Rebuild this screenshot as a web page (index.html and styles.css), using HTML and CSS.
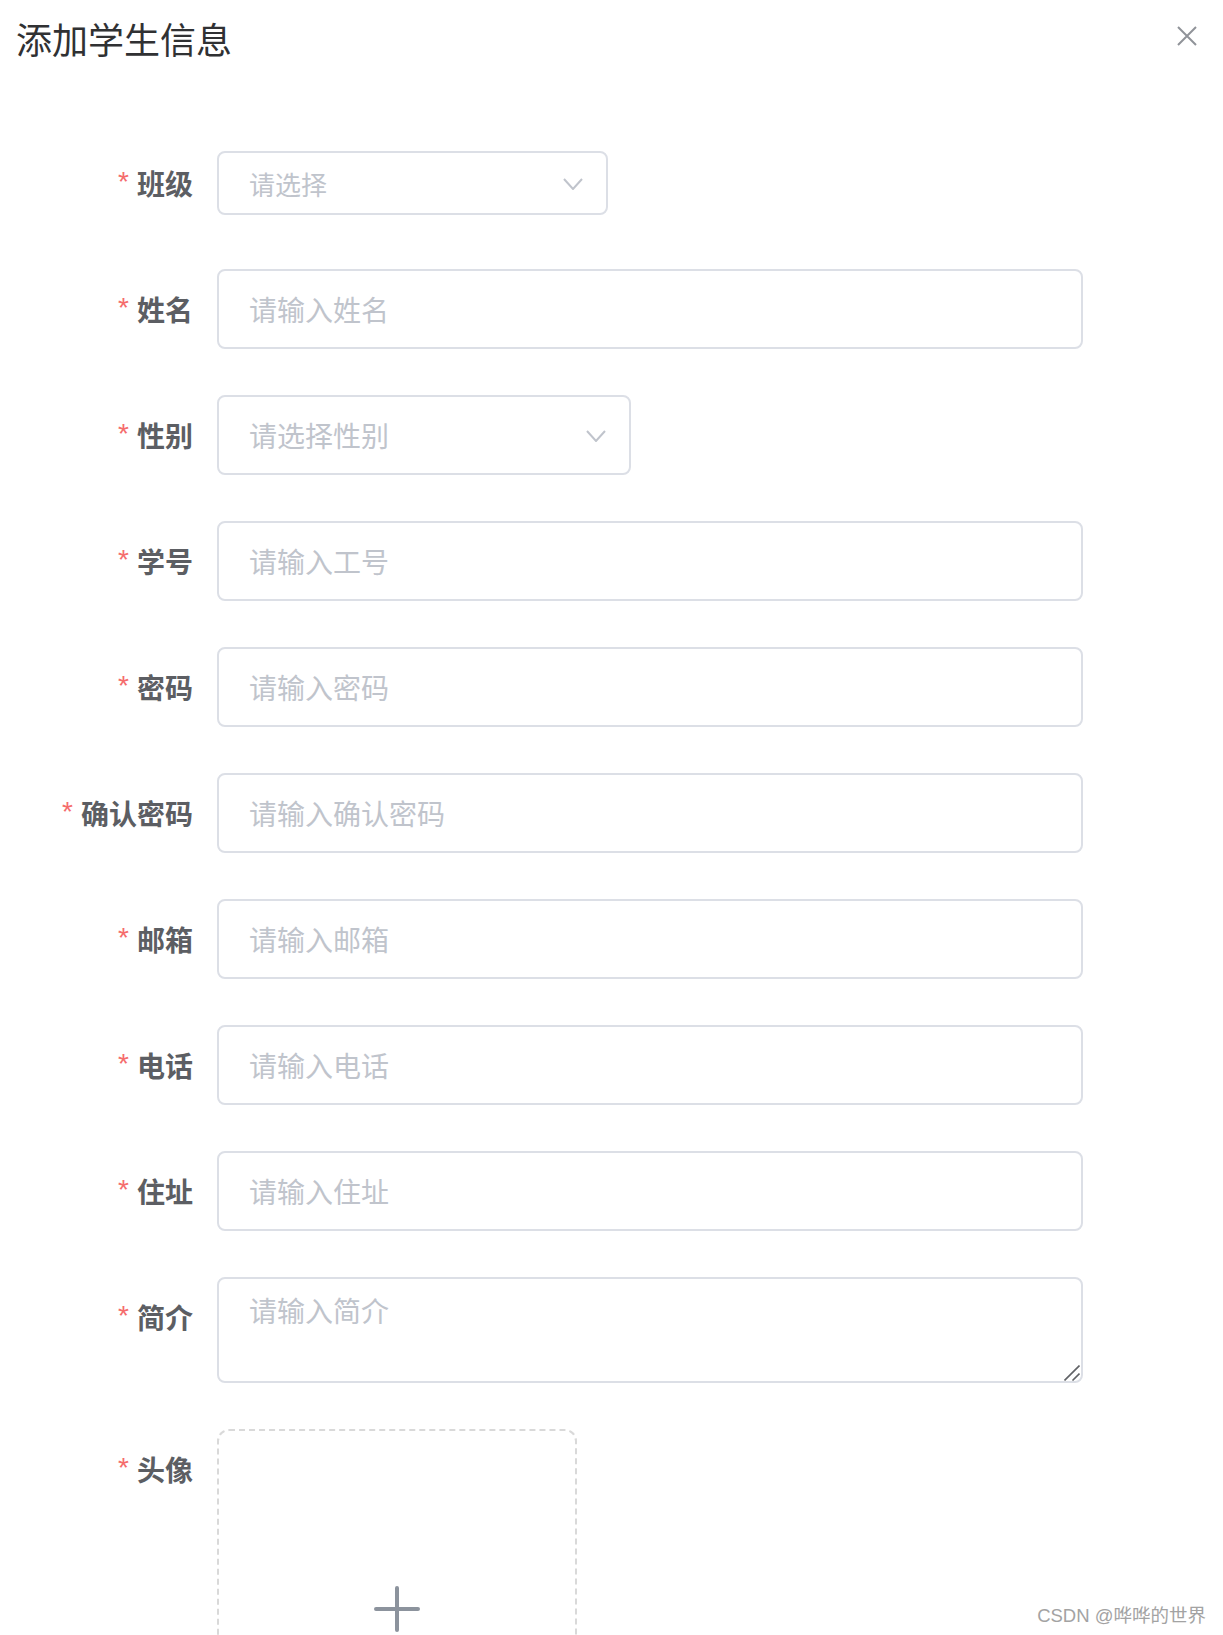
FILE: index.html
```
<!DOCTYPE html>
<html lang="zh-CN">
<head>
<meta charset="utf-8">
<title>添加学生信息</title>
<link rel="stylesheet" href="styles.css">
</head>
<body>
<div class="dialog">
  <header class="dialog-header">
    <span class="dialog-title">添加学生信息</span>
    <button class="dialog-close" type="button" aria-label="关闭">
      <svg viewBox="0 0 20 20" width="20" height="20"><path d="M1 1 L19 19 M19 1 L1 19" stroke="#909399" stroke-width="2" fill="none"/></svg>
    </button>
  </header>

  <form class="form">
    <div class="form-item">
      <label class="form-label">班级</label>
      <div class="form-content center">
        <div class="select select-small">
          <span class="select-placeholder">请选择</span>
          <svg class="select-arrow" viewBox="0 0 20 12" width="20" height="12"><path d="M1 1 L10 11 L19 1" stroke="#c0c4cc" stroke-width="2" fill="none"/></svg>
        </div>
      </div>
    </div>

    <div class="form-item">
      <label class="form-label">姓名</label>
      <div class="form-content"><input class="input" type="text" placeholder="请输入姓名"></div>
    </div>

    <div class="form-item">
      <label class="form-label">性别</label>
      <div class="form-content">
        <div class="select select-gender">
          <span class="select-placeholder">请选择性别</span>
          <svg class="select-arrow" viewBox="0 0 20 12" width="20" height="12"><path d="M1 1 L10 11 L19 1" stroke="#c0c4cc" stroke-width="2" fill="none"/></svg>
        </div>
      </div>
    </div>

    <div class="form-item">
      <label class="form-label">学号</label>
      <div class="form-content"><input class="input" type="text" placeholder="请输入工号"></div>
    </div>

    <div class="form-item">
      <label class="form-label">密码</label>
      <div class="form-content"><input class="input" type="password" placeholder="请输入密码"></div>
    </div>

    <div class="form-item">
      <label class="form-label">确认密码</label>
      <div class="form-content"><input class="input" type="password" placeholder="请输入确认密码"></div>
    </div>

    <div class="form-item">
      <label class="form-label">邮箱</label>
      <div class="form-content"><input class="input" type="text" placeholder="请输入邮箱"></div>
    </div>

    <div class="form-item">
      <label class="form-label">电话</label>
      <div class="form-content"><input class="input" type="text" placeholder="请输入电话"></div>
    </div>

    <div class="form-item">
      <label class="form-label">住址</label>
      <div class="form-content"><input class="input" type="text" placeholder="请输入住址"></div>
    </div>

    <div class="form-item">
      <label class="form-label">简介</label>
      <div class="form-content">
        <div class="textarea-wrap">
          <textarea class="textarea" rows="2" placeholder="请输入简介"></textarea>
          <svg class="textarea-grip" viewBox="0 0 16 16" width="16" height="16"><path d="M0.5 15.5 L15.5 0.5 M8.5 15.5 L15.5 8.5" stroke="#606266" stroke-width="1.6" fill="none"/></svg>
        </div>
      </div>
    </div>

    <div class="form-item">
      <label class="form-label">头像</label>
      <div class="form-content">
        <div class="avatar-uploader">
          <svg viewBox="0 0 46 46" width="46" height="46"><path d="M23 2 V44 M2 23 H44" stroke="#8c939d" stroke-width="4" stroke-linecap="round" fill="none"/></svg>
        </div>
      </div>
    </div>
  </form>

  <div class="watermark">CSDN @哗哗的世界</div>
</div>
</body>
</html>
```

FILE: styles.css
```
* {
  box-sizing: border-box;
}

html, body {
  margin: 0;
  padding: 0;
  background: #ffffff;
}

body {
  font-family: "Liberation Sans", "Noto Sans CJK SC", sans-serif;
  overflow: hidden;
  height: 1635px;
}

.dialog {
  position: relative;
  width: 1223px;
  height: 1635px;
  overflow: hidden;
}

.dialog-header {
  padding: 14px 0 0 16px;
  height: 62px;
}

.dialog-title {
  font-family: "Noto Sans CJK SC", sans-serif;
  font-size: 36px;
  line-height: 48px;
  color: #303133;
  font-weight: 400;
}

.dialog-close {
  position: absolute;
  top: 26px;
  right: 26px;
  width: 20px;
  height: 20px;
  padding: 0;
  border: 0;
  background: transparent;
  display: block;
}

.dialog-close svg {
  display: block;
}

.form {
  padding: 81px 0 0 17px;
  display: flex;
  flex-direction: column;
  gap: 46px;
}

.form-item {
  display: flex;
  align-items: flex-start;
}

.form-label {
  width: 200px;
  flex: 0 0 200px;
  height: 80px;
  padding-right: 24px;
  display: flex;
  align-items: center;
  justify-content: flex-end;
  font-family: "Noto Sans CJK SC", sans-serif;
  font-size: 28px;
  line-height: 40px;
  font-weight: 700;
  color: #5c5e63;
  white-space: nowrap;
}

.form-label::before {
  content: "*";
  font-family: "Liberation Sans", sans-serif;
  font-weight: 400;
  color: #f56c6c;
  margin-right: 8px;
  align-self: center;
  position: relative;
  top: -1px;
}

.form-content {
  width: 866px;
  flex: 0 0 866px;
  display: flex;
}

.form-content.center {
  height: 80px;
  align-items: center;
}

.input {
  width: 100%;
  height: 80px;
  border: 2px solid #dcdfe6;
  border-radius: 8px;
  padding: 0 30px;
  font-family: "Noto Sans CJK SC", sans-serif;
  font-size: 28px;
  color: #606266;
  background: #ffffff;
  outline: none;
}

.input::placeholder,
.textarea::placeholder {
  color: #c0c4cc;
  opacity: 1;
}

.select {
  position: relative;
  display: flex;
  align-items: center;
  border: 2px solid #dcdfe6;
  border-radius: 8px;
  padding: 0 60px 0 30px;
  background: #ffffff;
  font-family: "Noto Sans CJK SC", sans-serif;
  color: #c0c4cc;
}

.select-small {
  width: 391px;
  height: 64px;
  font-size: 26px;
}

.select-gender {
  width: 414px;
  height: 80px;
  font-size: 28px;
}

.select-arrow {
  position: absolute;
  right: 23px;
  top: 50%;
  margin-top: -5px;
  display: block;
}

.textarea-wrap {
  position: relative;
  width: 100%;
}

.textarea {
  display: block;
  width: 100%;
  height: 106px;
  border: 2px solid #dcdfe6;
  border-radius: 8px;
  padding: 10px 30px;
  font-family: "Noto Sans CJK SC", sans-serif;
  font-size: 28px;
  line-height: 42px;
  color: #606266;
  resize: none;
  outline: none;
  background: #ffffff;
}

.textarea-grip {
  position: absolute;
  right: 3px;
  bottom: 2px;
  display: block;
}

.avatar-uploader {
  width: 360px;
  height: 360px;
  border: 2px dashed #d9d9d9;
  border-radius: 12px;
  display: flex;
  align-items: center;
  justify-content: center;
  background: #ffffff;
}

.avatar-uploader svg {
  display: block;
}

.watermark {
  position: absolute;
  right: 17px;
  bottom: 9px;
  font-family: "Liberation Sans", "Noto Sans CJK SC", sans-serif;
  font-size: 18.5px;
  line-height: 20px;
  color: #a3a3a3;
  text-shadow: 0 0 1px rgba(255, 255, 255, 0.8);
  white-space: nowrap;
}
```
